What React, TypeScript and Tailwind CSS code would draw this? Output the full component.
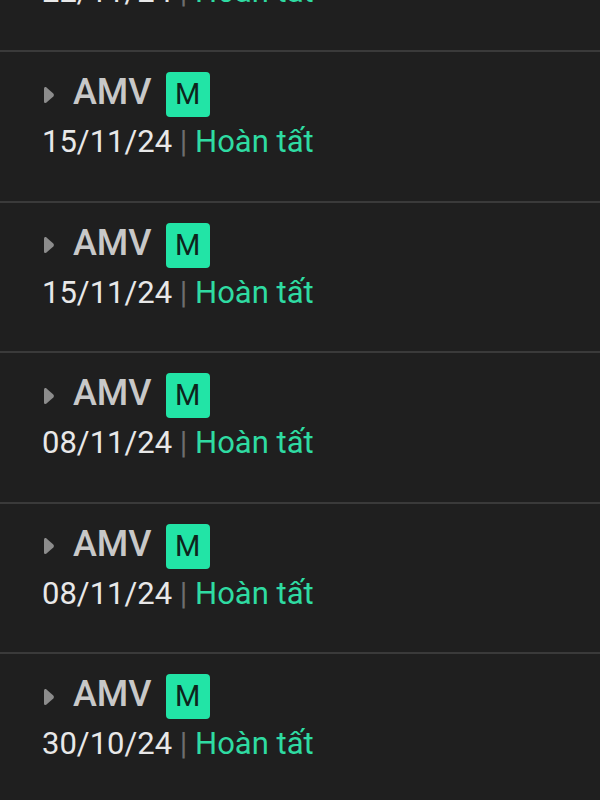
import React from "react";

// Order history rows, newest first
const ROWS = [
  { name: "AMV", tag: "M", date: "22/11/24", status: "Hoàn tất" },
  { name: "AMV", tag: "M", date: "15/11/24", status: "Hoàn tất" },
  { name: "AMV", tag: "M", date: "15/11/24", status: "Hoàn tất" },
  { name: "AMV", tag: "M", date: "08/11/24", status: "Hoàn tất" },
  { name: "AMV", tag: "M", date: "08/11/24", status: "Hoàn tất" },
  { name: "AMV", tag: "M", date: "30/10/24", status: "Hoàn tất" },
];

function Caret() {
  return (
    <svg width="12" height="18" viewBox="0 0 12 18" className="shrink-0">
      <path
        d="M1 2.6 C1 1.2 2.4 0.5 3.5 1.4 L10.3 7.6 C11.1 8.4 11.1 9.6 10.3 10.4 L3.5 16.6 C2.4 17.5 1 16.8 1 15.4 Z"
        fill="#8c8c8c"
      />
    </svg>
  );
}

function OrderRow({ row }: { row: (typeof ROWS)[number] }) {
  return (
    <div className="h-[150.5px] border-t-2 border-[#3a3a3a] pt-[20px] pl-[42px]">
      <div className="flex items-start h-[45px]">
        <div className="self-center ml-[1px] flex">
          <Caret />
        </div>
        <span className="ml-[18px] text-[36px] leading-[40px] font-medium text-[#c8c8c8]">
          {row.name}
        </span>
        <span className="ml-[14px] flex items-center justify-center w-[44px] h-[45px] rounded-[4px] bg-[#22e4a6] text-[#0e241c] text-[29px] leading-none">
          {row.tag}
        </span>
      </div>
      <div className="mt-[7px] text-[31px] leading-[36px] whitespace-pre">
        <span className="text-[#e8e8e8]">{row.date}</span>
        <span className="text-[#6e6e6e]"> | </span>
        <span className="text-[#2fdba2]">{row.status}</span>
      </div>
    </div>
  );
}

export default function App() {
  return (
    <div className="w-[600px] h-[800px] overflow-hidden bg-[#1f1f1f] font-['Roboto',sans-serif]">
      <div className="mt-[-100.5px]">
        {ROWS.map((row, i) => (
          <OrderRow key={i} row={row} />
        ))}
      </div>
    </div>
  );
}
